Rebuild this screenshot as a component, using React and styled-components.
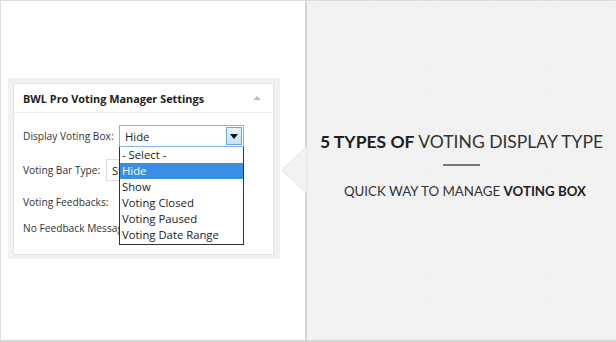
import React from "react";
import styled, { createGlobalStyle } from "styled-components";

const GlobalStyle = createGlobalStyle`
  html, body { margin: 0; padding: 0; background: #fff; }
  * { box-sizing: border-box; }
`;

const Frame = styled.div`
  width: 616px;
  height: 342px;
  display: flex;
  border-top: 1px solid #dcdcdc;
  border-left: 1px solid #dcdcdc;
  border-bottom: 2px solid #d6d6d6;
  overflow: hidden;
`;

const LeftPanel = styled.div`
  width: 306px;
  flex: none;
  background: #fff;
  border-right: 2px solid #d4d4d4;
  padding: 77px 0 0 7px;
`;

const BoxShadow = styled.div`
  width: 272px;
  height: 181px;
  background: #f1f1f1;
  padding: 5px 6px 4px 5px;
`;

const Box = styled.div`
  height: 100%;
  background: #fff;
  border: 1px solid #e4e4e4;
  font-family: "Open Sans", "Liberation Sans", sans-serif;
`;

const BoxHeader = styled.div`
  height: 29px;
  display: flex;
  align-items: center;
  justify-content: space-between;
  padding: 0 12px 0 9px;
  border-bottom: 1px solid #eeeeee;
`;

const Title = styled.h3`
  margin: 0;
  font-size: 10.9px;
  font-weight: 700;
  color: #222;
`;

const Caret = styled.span`
  width: 0;
  height: 0;
  border-left: 4px solid transparent;
  border-right: 4px solid transparent;
  border-bottom: 4px solid #bbb;
`;

const BoxBody = styled.div`
  padding: 12px 0 0 9px;
  display: flex;
  flex-direction: column;
`;

const Row = styled.div`
  display: flex;
  align-items: center;
  height: 22px;
  margin-top: ${(p) => p.$mt || 0}px;
`;

const Label = styled.span`
  font-size: 10.2px;
  color: #333;
  width: ${(p) => p.$w}px;
  flex: none;
  white-space: nowrap;
`;

const SelectWrap = styled.div`
  position: relative;
`;

const Select = styled.div`
  width: ${(p) => p.$w}px;
  height: 22px;
  display: flex;
  align-items: center;
  border: 1px solid ${(p) => (p.$focus ? "#7eb4ea" : "#ddd")};
  background: #fff;
  font-size: 11.3px;
  color: #222;
  padding-left: 5px;
  position: relative;
`;

const SelectButton = styled.span`
  position: absolute;
  right: 1px;
  top: 1px;
  bottom: 1px;
  width: 16px;
  background: linear-gradient(#e8f3fc, #c4e0f7);
  border: 1px solid #6aa7dd;
  display: flex;
  align-items: center;
  justify-content: center;
  &::after {
    content: "";
    border-left: 4px solid transparent;
    border-right: 4px solid transparent;
    border-top: 5px solid #111;
  }
`;

const Dropdown = styled.ul`
  position: absolute;
  left: 0;
  top: 22px;
  width: 125px;
  margin: 0;
  padding: 0 0 1px 0;
  list-style: none;
  background: #fff;
  border: 1px solid #333;
  border-top: none;
  z-index: 2;
`;

const Option = styled.li`
  height: 16px;
  line-height: 16px;
  font-size: 11.3px;
  padding-left: 2px;
  color: ${(p) => (p.$active ? "#fff" : "#222")};
  background: ${(p) => (p.$active ? "#3b8ee6" : "transparent")};
  white-space: nowrap;
`;

const RightPanel = styled.div`
  flex: 1;
  position: relative;
  background-color: #f2f2f2;
  background-image: url("data:image/svg+xml,%3Csvg xmlns='http://www.w3.org/2000/svg' width='60' height='52'%3E%3Cpath d='M0 13 L15 0 L45 0 L60 13 M0 13 L0 39 L15 52 M60 13 L60 39 L45 52 M15 26 L45 26' fill='none' stroke='%23f0f0f0' stroke-width='1'/%3E%3C/svg%3E");
  display: flex;
  flex-direction: column;
  align-items: center;
  padding-top: 130px;
  font-family: Lato, "Open Sans", sans-serif;
  color: #333;
`;

const Arrow = styled.svg`
  position: absolute;
  left: -26px;
  top: 145px;
`;

const Heading = styled.div`
  font-size: 17.5px;
  line-height: 22px;
  color: #333;
  white-space: nowrap;
  b { color: #1e1e1e; font-weight: 700; }
`;

const Rule = styled.div`
  width: 37px;
  height: 2px;
  background: #777;
  margin: 11px 0 0 0;
`;

const Sub = styled.div`
  font-size: 13.3px;
  line-height: 16px;
  margin-top: 17px;
  padding-left: 7px;
  color: #333;
  white-space: nowrap;
  b { color: #1e1e1e; font-weight: 700; }
`;

const options = ["- Select -", "Hide", "Show", "Voting Closed", "Voting Paused", "Voting Date Range"];

export default function App() {
  return (
    <>
      <GlobalStyle />
      <Frame>
        <LeftPanel>
          <BoxShadow>
            <Box>
              <BoxHeader>
                <Title>BWL Pro Voting Manager Settings</Title>
                <Caret />
              </BoxHeader>
              <BoxBody>
                <Row>
                  <Label $w={96}>Display Voting Box:</Label>
                  <SelectWrap>
                    <Select $w={125} $focus>
                      Hide
                      <SelectButton />
                    </Select>
                    <Dropdown>
                      {options.map((o) => (
                        <Option key={o} $active={o === "Hide"}>{o}</Option>
                      ))}
                    </Dropdown>
                  </SelectWrap>
                </Row>
                <Row $mt={12}>
                  <Label $w={83}>Voting Bar Type:</Label>
                  <Select $w={60}>St</Select>
                </Row>
                <Row $mt={10}>
                  <Label $w={110}>Voting Feedbacks:</Label>
                </Row>
                <Row $mt={4}>
                  <Label $w={110}>No Feedback Message:</Label>
                </Row>
              </BoxBody>
            </Box>
          </BoxShadow>
        </LeftPanel>
        <RightPanel>
          <Arrow width="27" height="50" viewBox="0 0 27 50">
            <polygon points="26,0 1,24 26,48" fill="#f2f2f2" stroke="#e2e2e2" strokeWidth="1" />
          </Arrow>
          <Heading>
            <b>5 TYPES OF</b> VOTING DISPLAY TYPE
          </Heading>
          <Rule />
          <Sub>
            QUICK WAY TO MANAGE <b>VOTING BOX</b>
          </Sub>
        </RightPanel>
      </Frame>
    </>
  );
}
